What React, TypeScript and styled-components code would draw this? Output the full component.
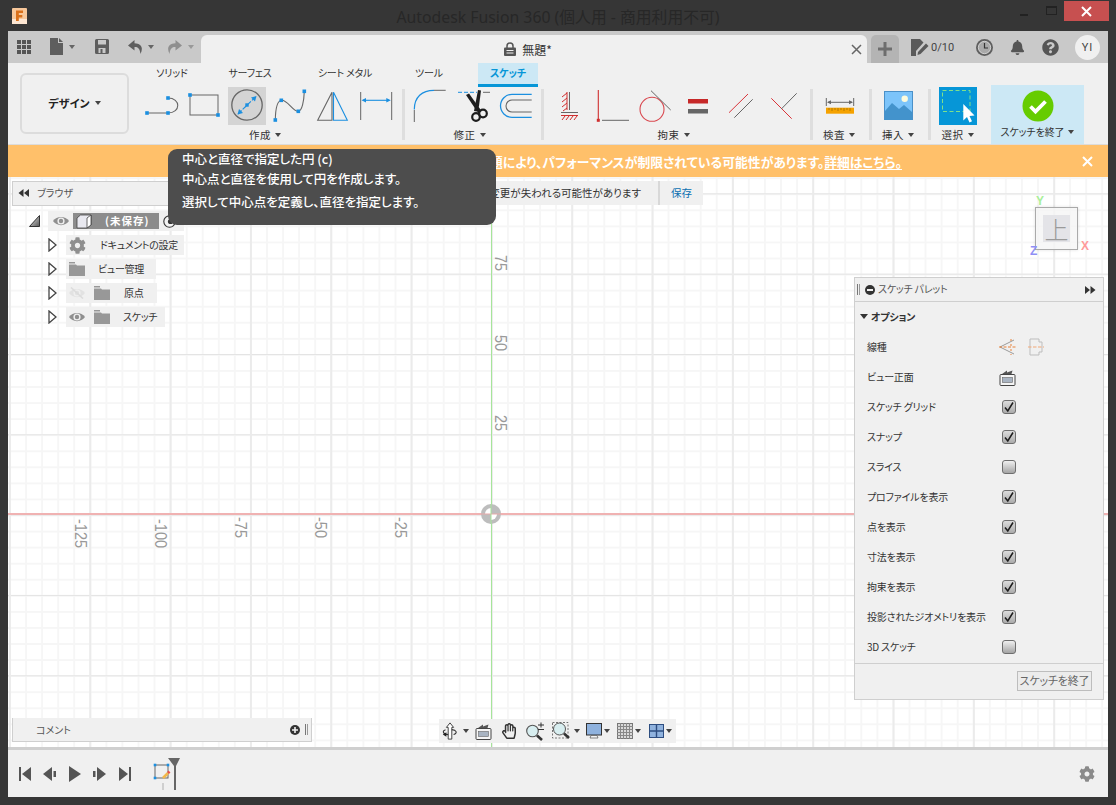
import React from "react";
import styled, { createGlobalStyle } from "styled-components";
import { FaBell, FaCog, FaQuestionCircle, FaRegHandPaper } from "react-icons/fa";

const JP = `"Noto Sans CJK JP", "Noto Sans", sans-serif`;
const BLUE = "#1b8fe0";
const GREY = "#666";
const RED = "#cf2f2f";

const GlobalStyle = createGlobalStyle`
  html, body { margin: 0; padding: 0; background: #363636; overflow: hidden; }
  * { box-sizing: border-box; }
  body { font-family: ${JP}; font-feature-settings: "palt"; }
`;

const Root = styled.div`
  position: relative;
  width: 1116px;
  height: 805px;
  display: flex;
  flex-direction: column;
  background: #363636;
  color: #333;
`;

/* ---- title bar ---- */
const TitleBar = styled.div`
  height: 31px;
  display: grid;
  grid-template-columns: 1fr auto 1fr;
  align-items: start;
`;
const AppLogo = styled.div`
  margin: 8px 0 0 12px;
  width: 15px;
  height: 16px;
`;
const TitleText = styled.div`
  margin-top: 6px;
  font-size: 15.8px;
  line-height: 22px;
  color: #272727;
  white-space: nowrap;
  font-family: "Noto Sans", ${JP};
`;
const WindowControls = styled.div`
  justify-self: end;
  display: flex;
  align-items: flex-start;
  margin: 1px 7px 0 0;
`;
const WinButton = styled.div<{ $close?: boolean }>`
  width: ${(p) => (p.$close ? 45 : 26)}px;
  height: 20px;
  display: flex;
  align-items: center;
  justify-content: center;
  background: ${(p) => (p.$close ? "#c75050" : "transparent")};
`;

/* ---- app frame ---- */
const Frame = styled.div`
  flex: 1;
  margin: 0 8px 8px;
  display: flex;
  flex-direction: column;
  min-height: 0;
`;

const TabBar = styled.div`
  height: 32px;
  flex: none;
  display: flex;
  background: #c9c9c9;
`;
const QuickBar = styled.div`
  width: 193px;
  padding-left: 9px;
  display: flex;
  align-items: center;
  padding-bottom: 1px;
`;
const QuickSlot = styled.div<{ $gap: number }>`
  display: flex;
  margin-left: ${(p) => p.$gap}px;
`;
const DocTab = styled.div`
  position: relative;
  width: 666px;
  margin-top: 4px;
  background: #f0f0f0;
  border-radius: 6px 6px 0 0;
  display: flex;
  align-items: center;
  justify-content: center;
  gap: 6px;
  font-size: 12px;
  padding-right: 12px;
  color: #333;
`;
const TabClose = styled.div`
  position: absolute;
  right: 5px;
  top: 9px;
  display: flex;
`;
const PlusTab = styled.div`
  width: 28px;
  margin: 4px 0 0 4px;
  background: #b4b4b4;
  border-radius: 5px 5px 0 0;
  display: flex;
  align-items: center;
  justify-content: center;
`;
const RightCluster = styled.div`
  flex: 1;
  display: flex;
  align-items: center;
  padding-left: 12px;
  color: #555;
`;
const Quota = styled.div`
  display: flex;
  align-items: center;
  gap: 2px;
  font-family: "Roboto", sans-serif;
  font-size: 11px;
  color: #444;
  width: 57px;
`;
const StatusIcon = styled.div`
  width: 33px;
  display: flex;
  justify-content: center;
  color: #555;
`;
const Avatar = styled.div`
  width: 25px;
  height: 25px;
  margin-left: 8px;
  border-radius: 50%;
  background: #f0f0f0;
  display: flex;
  align-items: center;
  justify-content: center;
  font-family: "Roboto", sans-serif;
  font-size: 11px;
  color: #444;
  letter-spacing: 1px;
`;

/* ---- ribbon ---- */
const Ribbon = styled.div`
  height: 82px;
  flex: none;
  display: flex;
  background: #f0f0f0;
  border-bottom: 1px solid #dcdcdc;
`;
const DesignBox = styled.div`
  margin: 10px 0 0 12px;
  width: 109px;
  height: 61px;
  padding-bottom: 2px;
  border: 2px solid #dcdcdc;
  border-radius: 6px;
  display: flex;
  align-items: center;
  justify-content: center;
  gap: 5px;
  font-size: 11px;
  font-weight: 700;
  color: #222;
`;
const ToolArea = styled.div`
  margin-left: 7px;
  display: flex;
  flex-direction: column;
`;
const TabRow = styled.div`
  height: 24px;
  display: flex;
`;
const RibbonTab = styled.div<{ $w: number; $active?: boolean; $gap?: number }>`
  width: ${(p) => p.$w}px;
  margin-left: ${(p) => p.$gap || 0}px;
  text-align: center;
  font-size: 10px;
  letter-spacing: -0.2px;
  line-height: 20px;
  white-space: nowrap;
  color: ${(p) => (p.$active ? "#0696d7" : "#333")};
  font-weight: ${(p) => (p.$active ? 700 : 400)};
  background: ${(p) => (p.$active ? "#cce8f5" : "transparent")};
  border-bottom: ${(p) => (p.$active ? "3px solid #0696d7" : "none")};
`;
const ToolRow = styled.div`
  display: flex;
  align-items: flex-start;
`;
const Group = styled.div<{ $l: number; $r: number }>`
  padding: 0 ${(p) => p.$r}px 0 ${(p) => p.$l}px;
  display: flex;
  flex-direction: column;
`;
const ToolIcons = styled.div`
  display: flex;
  gap: 5px;
`;
const Tool = styled.div<{ $state?: "active" | "select" }>`
  width: 38px;
  height: 38px;
  flex: none;
  background: ${(p) =>
    p.$state === "active" ? "#d4d4d4" : p.$state === "select" ? "#0696d7" : "transparent"};
`;
const GroupLabel = styled.div<{ $pull?: number }>`
  height: 19px;
  padding-right: ${(p) => p.$pull || 0}px;
  display: flex;
  align-items: center;
  justify-content: center;
  gap: 4px;
  font-size: 10.5px;
  white-space: nowrap;
  color: #333;
  letter-spacing: 0.5px;
`;
const FinishLabel = styled(GroupLabel)`
  font-size: 10px;
  letter-spacing: -0.1px;
`;
const Caret = styled.span<{ $color?: string; $big?: boolean }>`
  display: inline-block;
  flex: none;
  width: 0;
  height: 0;
  border-left: ${(p) => (p.$big ? 4 : 3.5)}px solid transparent;
  border-right: ${(p) => (p.$big ? 4 : 3.5)}px solid transparent;
  border-top: ${(p) => (p.$big ? 5 : 4)}px solid ${(p) => p.$color || "#444"};
`;
const GroupSep = styled.div`
  width: 3px;
  height: 51px;
  margin-top: 2px;
  background: #dedede;
`;
const FinishButton = styled.div`
  width: 93px;
  height: 59px;
  margin-top: -2px;
  background: #cce8f5;
  display: flex;
  flex-direction: column;
  align-items: center;
  padding-top: 5px;
`;

/* ---- banner ---- */
const Banner = styled.div`
  height: 32px;
  flex: none;
  display: flex;
  align-items: center;
  background: #ffc06a;
  color: #fff;
  font-size: 12.8px;
  font-weight: 700;
`;
const BannerText = styled.div`
  flex: 1;
  text-align: right;
  padding-right: 171px;
  white-space: nowrap;
  overflow: hidden;
  u { text-underline-offset: 2px; }
`;
const BannerClose = styled.div`
  width: 35px;
  display: flex;
  padding-left: 9px;
`;

/* ---- canvas ---- */
const Canvas = styled.div`
  position: relative;
  flex: 1;
  overflow: hidden;
  background-color: #fff;
  background-image:
    linear-gradient(to right, #ebebeb 2px, transparent 2px),
    linear-gradient(to bottom, #e4e4e4 1px, transparent 1px),
    linear-gradient(to right, #f6f6f6 2px, transparent 2px),
    linear-gradient(to bottom, #f6f6f6 2px, transparent 2px);
  background-size: 80.33px 100%, 100% 80.33px, 16.066px 100%, 100% 16.066px;
  background-position: 402.6px 0, 0 -64px, 402.6px 0, 0 -64px;
`;
const AxisV = styled.div`
  position: absolute;
  left: 483px;
  top: 0;
  bottom: 0;
  width: 1px;
  background: #a6e59a;
`;
const AxisH = styled.div`
  position: absolute;
  left: 0;
  right: 0;
  top: 336px;
  height: 2px;
  background: #f0b2b2;
`;
const OriginMark = styled.div`
  position: absolute;
  left: 473px;
  top: 327px;
  display: flex;
`;
const AxisLabel = styled.div<{ $x: number; $y: number }>`
  position: absolute;
  left: ${(p) => p.$x}px;
  top: ${(p) => p.$y}px;
  writing-mode: vertical-rl;
  transform: scaleY(0.88);
  transform-origin: top;
  font-family: "Liberation Sans", sans-serif;
  font-size: 16.5px;
  line-height: 14px;
  color: #999;
`;

/* ---- browser ---- */
const BrowserPanel = styled.div`
  position: absolute;
  left: 4px;
  top: 4px;
  width: 300px;
`;
const PanelHeader = styled.div`
  height: 25px;
  display: flex;
  align-items: center;
  gap: 8px;
  padding: 0 0 2px 5px;
  background: #f0f0f0;
  border: 1px solid #cfcfcf;
  font-size: 10px;
  color: #555;
`;
const Tree = styled.div`
  margin-top: 5px;
  display: flex;
  flex-direction: column;
  gap: 4px;
`;
const TreeRow = styled.div<{ $indent: number }>`
  height: 20px;
  display: flex;
  align-items: center;
  padding-left: ${(p) => p.$indent}px;
`;
const TreeToggle = styled.div<{ $gap: number }>`
  display: flex;
  margin-right: ${(p) => p.$gap}px;
`;
const TreePill = styled.div<{ $w: number }>`
  width: ${(p) => p.$w}px;
  height: 20px;
  display: flex;
  align-items: center;
  background: #f0f0f0;
  font-size: 10px;
  letter-spacing: -0.3px;
  color: #333;
  white-space: nowrap;
`;
const TreeIcon = styled.div<{ $w: number }>`
  width: ${(p) => p.$w}px;
  flex: none;
  display: flex;
  justify-content: center;
  color: #8f8f8f;
`;
const RootBlock = styled.div`
  width: 86px;
  height: 16px;
  display: flex;
  align-items: center;
  background: #8c8c8c;
  color: #fff;
  font-weight: 700;
  font-size: 10.5px;
  letter-spacing: 1px;
`;
const TreeText = styled.span<{ $ml: number }>`
  margin-left: ${(p) => p.$ml}px;
  padding-bottom: 1px;
`;

const WarningBar = styled.div`
  position: absolute;
  left: 308px;
  top: 4px;
  width: 387px;
  height: 24px;
  display: flex;
  align-items: center;
  background: #f0f0f0;
  font-size: 10.5px;
  color: #333;
`;
const WarningText = styled.div`
  flex: 1;
  text-align: right;
  padding: 0 17px 2px 0;
  white-space: nowrap;
`;
const WarningSave = styled.div`
  width: 45px;
  height: 24px;
  padding-bottom: 2px;
  border-left: 2px solid #d8d8d8;
  display: flex;
  align-items: center;
  justify-content: center;
  color: #0a6fb0;
`;

const CommentPanel = styled.div`
  position: absolute;
  left: 4px;
  bottom: 5px;
  width: 300px;
  height: 24px;
  display: flex;
  align-items: center;
  padding: 0 3px 0 23px;
  background: #f0f0f0;
  border: 1px solid #cfcfcf;
  border-top: none;
  font-size: 10px;
  color: #555;
`;
const CommentTools = styled.div`
  margin-left: auto;
  display: flex;
  align-items: center;
  gap: 5px;
`;
const Grip = styled.div`
  width: 3px;
  height: 11px;
  border-left: 1px solid #777;
  border-right: 1px solid #999;
`;

/* ---- view cube ---- */
const ViewCube = styled.div`
  position: absolute;
  left: 1027px;
  top: 30px;
  width: 43px;
  height: 43px;
  padding: 7px;
  background: rgba(245, 245, 245, 0.8);
  border: 1px solid #aaa;
  box-shadow: 0 0 3px rgba(0, 0, 0, 0.12);
`;
const CubeFace = styled.div`
  width: 27px;
  height: 27px;
  background: #e4e4e8;
  color: #9a9a9a;
  display: flex;
  align-items: center;
  justify-content: center;
  font-size: 24px;
  line-height: 27px;
  font-weight: 300;
`;
const CubeAxis = styled.span<{ $c: string; $l: number; $t: number }>`
  position: absolute;
  left: ${(p) => p.$l}px;
  top: ${(p) => p.$t}px;
  font-family: "Liberation Sans", sans-serif;
  font-size: 12px;
  line-height: 12px;
  font-weight: 700;
  color: ${(p) => p.$c};
`;

/* ---- sketch palette ---- */
const Palette = styled.div`
  position: absolute;
  left: 846px;
  top: 100px;
  width: 250px;
  background: #f0f0f0;
  border: 1px solid #cfcfcf;
  font-size: 10px;
  letter-spacing: -0.2px;
  color: #333;
`;
const PaletteHead = styled.div`
  height: 24px;
  display: flex;
  align-items: center;
  padding: 0 7px 0 2px;
  border-bottom: 1px solid #cfcfcf;
  color: #555;
`;
const PaletteTitle = styled.span`
  margin-left: -2px;
  padding-bottom: 2px;
`;
const OptionHead = styled.div`
  height: 30px;
  display: flex;
  align-items: center;
  gap: 3px;
  padding: 0 0 2px 5px;
  font-weight: 700;
  color: #333;
`;
const OptionRow = styled.div`
  height: 30px;
  display: flex;
  align-items: center;
  padding-left: 12px;
`;
const OptionLabel = styled.div`
  width: 135px;
  flex: none;
  padding-bottom: 2px;
  white-space: nowrap;
`;
const OptionIcons = styled.div`
  display: flex;
  align-items: center;
  gap: 10px;
  margin-left: -3px;
`;
const CheckBox = styled.div<{ $on: boolean }>`
  width: 14px;
  height: 14px;
  border: 1px solid #6e6e6e;
  border-radius: 3px;
  background: ${(p) =>
    p.$on
      ? "linear-gradient(#dcdcdc, #ababab)"
      : "linear-gradient(#f0f0f0, #a4a4a4)"};
  display: flex;
  align-items: center;
  justify-content: center;
`;
const PaletteFoot = styled.div`
  margin-top: 1px;
  height: 36px;
  display: flex;
  align-items: flex-start;
  justify-content: flex-end;
  padding: 7px 11px 0 0;
  border-top: 1px solid #cfcfcf;
`;
const PlainButton = styled.div`
  width: 75px;
  height: 20px;
  border: 1px solid #bdbdbd;
  background: #ececec;
  color: #666;
  font-size: 11px;
  line-height: 17px;
  text-align: center;
  white-space: nowrap;
`;

/* ---- nav bar ---- */
const NavBar = styled.div`
  position: absolute;
  left: 431px;
  top: 542px;
  width: 237px;
  height: 24px;
  display: flex;
  align-items: center;
  padding-left: 2px;
  background: #f0f0f0;
`;
const NavSlot = styled.div<{ $w: number; $ml?: number }>`
  width: ${(p) => p.$w}px;
  margin-left: ${(p) => p.$ml || 0}px;
  flex: none;
  display: flex;
  align-items: center;
  justify-content: center;
  color: #333;
`;

/* ---- timeline ---- */
const Timeline = styled.div`
  height: 50px;
  flex: none;
  display: flex;
  align-items: center;
  padding: 0 13px 0 4px;
  background: #f0f0f0;
  border-top: 3px solid #cfcfcf;
`;
const PlayButton = styled.div`
  width: 25px;
  display: flex;
  justify-content: center;
`;
const TimelineMarks = styled.div`
  margin-left: 16px;
  display: flex;
`;
const TimelineGear = styled.div`
  margin-left: auto;
  display: flex;
  color: #8a8a8a;
`;

/* ---- tooltip ---- */
const Tooltip = styled.div`
  position: absolute;
  left: 168px;
  top: 149px;
  width: 328px;
  height: 76px;
  padding-left: 14px;
  border-radius: 9px;
  background: #4d4d4d;
  color: #fff;
  font-size: 12.5px;
  font-weight: 500;
  line-height: 20px;
  white-space: nowrap;
`;
const TipLine = styled.div<{ $gap?: number }>`
  margin-top: ${(p) => p.$gap || 0}px;
`;

/* ---- drawings ---- */
const Sq = ({ x, y, c = BLUE, s = 3.6 }: { x: number; y: number; c?: string; s?: number }) => (
  <rect x={x - s / 2} y={y - s / 2} width={s} height={s} fill={c} />
);

const Ico = ({ children, s = 38 }: { children: React.ReactNode; s?: number }) => (
  <svg width={s} height={s} viewBox={`0 0 ${s} ${s}`} fill="none" style={{ display: "block" }}>
    {children}
  </svg>
);

const SlotIcon = () => (
  <Ico>
    <path d="M5 26H26" stroke={GREY} strokeWidth="1" />
    <path d="M26 11C39 11 39 26 26 26" stroke={GREY} strokeWidth="1.1" />
    <Sq x={5} y={26} />
    <Sq x={26} y={26} />
    <Sq x={26} y={11} />
  </Ico>
);
const RectIcon = () => (
  <Ico>
    <rect x="5" y="8" width="28" height="20" stroke={GREY} strokeWidth="1" />
    <Sq x={5} y={8} />
    <Sq x={33} y={28} />
  </Ico>
);
const CircleIcon = () => (
  <Ico>
    <circle cx="19" cy="18" r="15.2" stroke={GREY} strokeWidth="1.3" />
    <path d="M10 27L28 9.5" stroke={BLUE} strokeWidth="1.1" strokeDasharray="5 1.5" />
    <path d="M28.5 9L23 10.5L27 14.5Z" fill={BLUE} />
    <path d="M9.5 27.5L15 26L11 22Z" fill={BLUE} />
    <Sq x={19} y={18} s={3.4} />
  </Ico>
);
const SplineIcon = () => (
  <Ico>
    <path d="M4.3 33C4.5 22 6 14 10.3 13.3C16 12 22 25 27.3 24.3C31 24 33 14 33.3 4.3" stroke={GREY} strokeWidth="1.1" />
    <Sq x={4.3} y={33} />
    <Sq x={10.3} y={13.3} />
    <Sq x={27.3} y={24.3} />
    <Sq x={33.3} y={4.3} />
  </Ico>
);
const TriangleIcon = () => (
  <Ico>
    <path d="M18 5.3L3.7 33.3H18Z" stroke={GREY} strokeWidth="1.1" />
    <path d="M19.5 5.3L33.3 33.3H19.5Z" stroke={BLUE} strokeWidth="1.1" />
  </Ico>
);
const DimIcon = () => (
  <Ico>
    <path d="M3.7 5V33M34.7 5V33" stroke={GREY} strokeWidth="1" />
    <path d="M6 13.3H32" stroke={BLUE} strokeWidth="1.1" />
    <path d="M4.5 13.3L9 11V15.6ZM33.8 13.3L29.3 11V15.6Z" fill={BLUE} />
  </Ico>
);
const FilletIcon = () => (
  <Ico>
    <path d="M3.3 23V35M23 3.3H34.7" stroke={GREY} strokeWidth="1" />
    <path d="M3.3 22.5C3.3 10 11 3.3 23 3.3" stroke={BLUE} strokeWidth="1.2" />
  </Ico>
);
const ScissorsIcon = () => (
  <Ico>
    <path d="M4 5.3H23" stroke={BLUE} strokeWidth="1" strokeDasharray="4 2" />
    <path d="M29 5.3H36" stroke={GREY} strokeWidth="1" />
    <path d="M12 8L15 6.5L27.5 24L24.5 26.5Z" fill="#1d1d1d" />
    <path d="M24 3L27 3.5L25 19L23 24.5L20 24Z" fill="#1d1d1d" />
    <circle cx="22" cy="30" r="3.8" stroke="#1d1d1d" strokeWidth="2.2" />
    <circle cx="29" cy="26.5" r="3.8" stroke="#1d1d1d" strokeWidth="2.2" />
  </Ico>
);
const OffsetIcon = () => (
  <Ico>
    <path d="M34.7 7.3H15A11.5 11.5 0 0 0 15 30.3H34.7" stroke={BLUE} strokeWidth="1.3" />
    <path d="M34.7 13H15A6 6 0 0 0 15 25H34.7" stroke={GREY} strokeWidth="1.1" />
  </Ico>
);
const FixIcon = () => (
  <Ico>
    <path d="M19.5 5V23M11 25.5H28" stroke={GREY} strokeWidth="1" />
    <path d="M17 5V23M11 28.5H28" stroke={RED} strokeWidth="1" />
    <path d="M17 6L12 10M17 11L12 15M17 16L12 20M17 21L13 24" stroke={RED} strokeWidth="1" />
    <path d="M15 29L12 33M19 29L16 33M23 29L20 33M27 29L24 33" stroke={RED} strokeWidth="1" />
  </Ico>
);
const CoincidentIcon = () => (
  <Ico>
    <path d="M5.3 3V32" stroke={RED} strokeWidth="1.1" />
    <rect x="3.8" y="31.8" width="3" height="3" fill={RED} />
    <path d="M9 33.3H36" stroke={GREY} strokeWidth="1" />
  </Ico>
);
const TangentIcon = () => (
  <Ico>
    <circle cx="16" cy="22.3" r="12" stroke="#d9484f" strokeWidth="1.1" />
    <path d="M15 3.7L34.7 23" stroke={GREY} strokeWidth="1" />
  </Ico>
);
const EqualIcon = () => (
  <Ico>
    <rect x="9" y="12" width="20" height="4.5" fill="#c62828" />
    <rect x="9" y="22" width="20" height="4.5" fill={GREY} />
  </Ico>
);
const ParallelIcon = () => (
  <Ico>
    <path d="M7 25.7L26 7" stroke="#d9343a" strokeWidth="1" />
    <path d="M12.3 30.7L30.7 12.3" stroke={GREY} strokeWidth="1" />
  </Ico>
);
const PerpIcon = () => (
  <Ico>
    <path d="M6.3 11.3L26.7 31.7" stroke="#d9343a" strokeWidth="1" />
    <path d="M16.3 22L31.7 6.3" stroke={GREY} strokeWidth="1" />
  </Ico>
);
const MeasureIcon = () => (
  <Ico>
    <path d="M5.3 11V19M32.7 11V19M7 15.3H31" stroke={GREY} strokeWidth="1" />
    <path d="M6 15.3L10 13.3V17.3ZM32 15.3L28 13.3V17.3Z" fill={GREY} />
    <rect x="5" y="20.7" width="28" height="6" fill="#f5a200" />
    <path d="M8 21V23M11 21V24M14 21V23M17 21V24M20 21V23M23 21V24M26 21V23M29 21V24" stroke="#9a6a00" strokeWidth="0.7" />
  </Ico>
);
const ImageIcon = () => (
  <Ico>
    <rect x="5.5" y="4.5" width="28" height="28" fill="#7cc4fa" stroke="#4a90c8" />
    <path d="M6 33V24L13 16L20 22L25 18L33 25V33Z" fill="#4393cc" />
    <circle cx="25.7" cy="11.7" r="3.2" fill="#fdfbdc" />
  </Ico>
);
const SelectIcon = () => (
  <Ico>
    <rect x="3.5" y="3.5" width="27.5" height="21" stroke="#7fe08a" strokeWidth="1" strokeDasharray="4 2.5" />
    <path d="M24.3 17V33.5L28 30L30.5 35.5L33 34.3L30.5 29L35.5 28.5Z" fill="#fff" />
  </Ico>
);
const CheckCircle = () => (
  <svg width="32" height="32" viewBox="0 0 32 32" style={{ display: "block" }}>
    <circle cx="16" cy="16" r="15.5" fill="#66cc00" />
    <path d="M8.5 16.5L13.5 21.5L23.5 11.5" fill="none" stroke="#fff" strokeWidth="3.8" />
  </svg>
);

const XMark = ({ s = 11, c = "#fff", w = 2 }: { s?: number; c?: string; w?: number }) => (
  <svg width={s} height={s} viewBox="0 0 11 11" style={{ display: "block" }}>
    <path d="M1 1L10 10M10 1L1 10" stroke={c} strokeWidth={w} fill="none" />
  </svg>
);

const LogoIcon = () => (
  <svg width="15" height="16" viewBox="0 0 15 16" style={{ display: "block" }}>
    <rect width="15" height="16" rx="1" fill="#f7c79a" />
    <rect y="11" width="15" height="5" fill="#fde6d2" />
    <path d="M4 2.5H11V5H6.8V7H10.3V9.5H6.8V13H4Z" fill="#d9701a" />
  </svg>
);

const AppsIcon = () => (
  <svg width="14" height="14" viewBox="0 0 14 14" fill="#555" style={{ display: "block" }}>
    {[0, 5, 10].map((y) =>
      [0, 5, 10].map((x) => <rect key={`${x}-${y}`} x={x} y={y} width="4" height="4" />)
    )}
  </svg>
);
const FileIcon = () => (
  <svg width="13" height="17" viewBox="0 0 13 17" fill="#5e5e5e" style={{ display: "block" }}>
    <path d="M0 0H8V5H13V17H0ZM9 0L13 4H9Z" />
  </svg>
);
const SaveIcon = () => (
  <svg width="14" height="15" viewBox="0 0 14 15" style={{ display: "block" }}>
    <path d="M0 1.5A1.5 1.5 0 0 1 1.5 0H12.5A1.5 1.5 0 0 1 14 1.5V13.5A1.5 1.5 0 0 1 12.5 15H1.5A1.5 1.5 0 0 1 0 13.5Z" fill="#5e5e5e" />
    <rect x="3" y="1" width="8" height="4.5" fill="#c9c9c9" />
    <rect x="3.5" y="9" width="7" height="5" fill="#c9c9c9" />
    <rect x="5.5" y="10" width="2" height="4" fill="#5e5e5e" />
  </svg>
);
const UndoIcon = ({ c, flip }: { c: string; flip?: boolean }) => (
  <svg width="15" height="14" viewBox="0 0 15 14" style={{ display: "block", transform: flip ? "scaleX(-1)" : undefined }}>
    <path d="M6.5 0L0 5.5L6.5 10.5V7C9.5 6.8 11.8 8 12.5 14C15.5 8 13.5 3.5 6.5 3.3Z" fill={c} />
  </svg>
);
const LockIcon = () => (
  <svg width="12" height="14" viewBox="0 0 12 14" style={{ display: "block" }}>
    <path d="M3 6V4A3 3 0 0 1 9 4V6" stroke="#555" strokeWidth="1.5" fill="none" />
    <rect y="5.5" width="12" height="8.5" rx="1" fill="#555" />
    <path d="M2.5 8.5H9.5M2.5 11H9.5" stroke="#f0f0f0" strokeWidth="1" />
  </svg>
);
const QuotaIcon = () => (
  <svg width="18" height="17" viewBox="0 0 18 17" style={{ display: "block" }}>
    <path d="M0 0H9L12.5 3.5L5 12V17H0Z" fill="#5a5a5a" />
    <path d="M7 13L15 4.5L17.5 7L9.5 15L6.5 16Z" fill="#5a5a5a" />
  </svg>
);
const ClockIcon = () => (
  <svg width="17" height="17" viewBox="0 0 17 17" style={{ display: "block" }}>
    <circle cx="8.5" cy="8.5" r="8.5" fill="#5f5f5f" />
    <circle cx="8.5" cy="8.5" r="6.2" fill="#a9a9a9" stroke="#e2e2e2" strokeWidth="0.8" />
    <path d="M8.5 4V9H12" stroke="#333" strokeWidth="1.2" fill="none" />
  </svg>
);

const DoubleArrow = ({ left }: { left?: boolean }) => (
  <svg width="11" height="8" viewBox="0 0 11 8" fill="#333" style={{ display: "block", transform: left ? "scaleX(-1)" : undefined }}>
    <path d="M0 0L5 4L0 8ZM5.5 0L10.5 4L5.5 8Z" />
  </svg>
);
const EyeIcon = ({ off }: { off?: boolean }) => (
  <svg width="16" height="12" viewBox="0 0 16 12" style={{ display: "block" }}>
    <path d="M0 6C3.5 0.5 12.5 0.5 16 6C12.5 11.5 3.5 11.5 0 6Z" fill={off ? "#e2e2e2" : "#8f8f8f"} />
    <circle cx="8" cy="6" r="3.6" fill="#f0f0f0" />
    <circle cx="8" cy="6" r="2.2" fill={off ? "#e2e2e2" : "#8f8f8f"} />
    {off && <path d="M2 0.5L14 11.5" stroke="#dcdcdc" strokeWidth="1.6" />}
  </svg>
);
const FolderIcon = () => (
  <svg width="16" height="14" viewBox="0 0 16 14" fill="#989898" style={{ display: "block" }}>
    <path d="M0 0H6V1.5H0ZM0 2.5H7L8 3.5H16V14H0Z" />
  </svg>
);
const RootToggle = () => (
  <svg width="11" height="12" viewBox="0 0 11 12" style={{ display: "block" }}>
    <defs>
      <linearGradient id="rootFill" x1="0" y1="0" x2="1" y2="1">
        <stop offset="0" stopColor="#eee" />
        <stop offset="1" stopColor="#555" />
      </linearGradient>
    </defs>
    <path d="M10.5 0.5V11.5H0.5Z" fill="url(#rootFill)" stroke="#333" />
  </svg>
);
const ChildToggle = () => (
  <svg width="9" height="14" viewBox="0 0 9 14" style={{ display: "block" }}>
    <path d="M1 1L8 7L1 13Z" fill="#fff" stroke="#444" strokeWidth="1.3" />
  </svg>
);
const CubeIcon = () => (
  <svg width="16" height="15" viewBox="0 0 16 15" style={{ display: "block" }}>
    <path d="M1 4L4.5 1H15L15 11L11 14H1Z" fill="#e9e9f0" stroke="#444" strokeWidth="0.8" />
    <path d="M11 4V14L15 11V1Z" fill="#fff" stroke="#444" strokeWidth="0.8" />
  </svg>
);
const RadioMark = () => (
  <svg width="13" height="13" viewBox="0 0 13 13" style={{ display: "block" }}>
    <circle cx="6.5" cy="6.5" r="5.7" fill="#f4f4f4" stroke="#333" strokeWidth="1.1" />
    <circle cx="7.5" cy="6.5" r="2.6" fill="#333" />
  </svg>
);
const MinusCircle = () => (
  <svg width="10" height="10" viewBox="0 0 10 10" style={{ display: "block" }}>
    <circle cx="5" cy="5" r="5" fill="#333" />
    <rect x="2" y="4" width="6" height="2" fill="#f0f0f0" />
  </svg>
);
const PlusCircle = () => (
  <svg width="10" height="10" viewBox="0 0 10 10" style={{ display: "block" }}>
    <circle cx="5" cy="5" r="5" fill="#333" />
    <path d="M2 4.2H4.2V2H5.8V4.2H8V5.8H5.8V8H4.2V5.8H2Z" fill="#f0f0f0" />
  </svg>
);
const OriginIcon = () => (
  <svg width="20" height="20" viewBox="0 0 20 20" style={{ display: "block" }}>
    <circle cx="10" cy="10" r="10" fill="#bdbdbd" />
    <path d="M10 4A6 6 0 0 0 4 10H10Z" fill="#fff" />
    <path d="M10 16A6 6 0 0 0 16 10H10Z" fill="#fff" />
    <path d="M0 10H20" stroke="#e9a9a9" strokeWidth="1" />
    <path d="M10 0V20" stroke="#a6e59a" strokeWidth="1" />
  </svg>
);
const LineTypeA = () => (
  <svg width="18" height="18" viewBox="0 0 18 18" style={{ display: "block" }}>
    <path d="M1 9L15 2M1 9L15 16" stroke="#9a9a9a" strokeWidth="1" fill="none" />
    <path d="M0 9H17" stroke="#e8823a" strokeWidth="1" strokeDasharray="3 1.5" />
    <path d="M12 1V17" stroke="#e8823a" strokeWidth="1" strokeDasharray="2 3" />
  </svg>
);
const LineTypeB = () => (
  <svg width="18" height="18" viewBox="0 0 18 18" style={{ display: "block" }}>
    <path d="M3 1H12V4H15V14H12V17H3Z" stroke="#bdbdbd" strokeWidth="1" fill="none" strokeLinejoin="round" />
    <path d="M1 9H17" stroke="#f2a978" strokeWidth="1" strokeDasharray="3.5 1.5" />
  </svg>
);
const ViewFrontIcon = () => (
  <svg width="17" height="17" viewBox="0 0 17 17" style={{ display: "block" }}>
    <path d="M3 5L8 1.5V3.5L13.5 1.5L12.5 5Z" fill="#555" />
    <rect x="1" y="5.5" width="15" height="11" rx="1" fill="#f5f5f5" stroke="#444" />
    <rect x="3.5" y="8.5" width="10" height="5" fill="#a9b4c2" stroke="#666" strokeWidth="0.6" />
  </svg>
);
const CheckMark = () => (
  <svg width="12" height="12" viewBox="0 0 12 12" style={{ display: "block" }}>
    <path d="M2 6.5L4.8 10L10 1.5" fill="none" stroke="#1c1c1c" strokeWidth="1.5" />
  </svg>
);

const OrbitIcon = () => (
  <svg width="20" height="20" viewBox="0 0 20 20" style={{ display: "block" }}>
    <path d="M10 1L14 6H12V19H8V6H6Z" fill="#fff" stroke="#333" strokeWidth="1" />
    <path d="M8 14C2 13.5 1 10 5 8.5M12 8.5C17 9 19 12 14 14" fill="none" stroke="#333" strokeWidth="1.2" />
    <path d="M2 14L6 11.5V16.5Z" fill="#222" />
  </svg>
);
const ZoomLens = () => (
  <svg width="20" height="20" viewBox="0 0 20 20" style={{ display: "block" }}>
    <circle cx="7.5" cy="10" r="5.8" fill="#d8eef0" stroke="#555" strokeWidth="1.1" />
    <path d="M12 14.5L17 19" stroke="#333" strokeWidth="2.6" />
    <path d="M13 4H19M16 1.5V6.5M13 8.5H19" stroke="#333" strokeWidth="1" />
  </svg>
);
const FitIcon = () => (
  <svg width="18" height="18" viewBox="0 0 18 18" style={{ display: "block" }}>
    <rect x="0.5" y="0.5" width="15.5" height="15.5" fill="none" stroke="#555" strokeWidth="0.8" strokeDasharray="2 1.5" />
    <circle cx="7.5" cy="7" r="6" fill="#d8eef0" stroke="#555" strokeWidth="1" />
    <path d="M12 11.5L17 16" stroke="#333" strokeWidth="2.6" />
  </svg>
);
const DisplayIcon = () => (
  <svg width="16" height="16" viewBox="0 0 16 16" style={{ display: "block" }}>
    <rect x="0.5" y="0.5" width="15" height="11.5" fill="#8fb2de" stroke="#333" />
    <path d="M5 12.5H11L12 15H4Z" fill="#f5f5f5" stroke="#555" strokeWidth="0.7" />
  </svg>
);
const GridIcon = () => (
  <svg width="16" height="16" viewBox="0 0 16 16" style={{ display: "block" }}>
    <rect x="0.5" y="0.5" width="15" height="15" fill="#d9d9d9" stroke="#777" />
    <path d="M3.5 0V16M6.5 0V16M9.5 0V16M12.5 0V16M0 3.5H16M0 6.5H16M0 9.5H16M0 12.5H16" stroke="#888" strokeWidth="1" />
  </svg>
);
const PanesIcon = () => (
  <svg width="15" height="14" viewBox="0 0 15 14" style={{ display: "block" }}>
    <rect x="0.5" y="0.5" width="14" height="13" fill="#8fb2de" stroke="#2d4d80" />
    <path d="M7.5 0V14M0 7H15" stroke="#2d4d80" strokeWidth="1.4" />
  </svg>
);

const FirstIcon = () => (
  <svg width="12" height="14" viewBox="0 0 12 14" fill="#555" style={{ display: "block" }}>
    <rect width="2" height="14" />
    <path d="M12 0V14L3 7Z" />
  </svg>
);
const PrevIcon = () => (
  <svg width="13" height="14" viewBox="0 0 13 14" fill="#555" style={{ display: "block" }}>
    <path d="M9 0V14L0 7Z" />
    <rect x="10.5" y="4" width="2.5" height="6" />
  </svg>
);
const PlayIcon = () => (
  <svg width="12" height="16" viewBox="0 0 12 16" fill="#555" style={{ display: "block" }}>
    <path d="M0 0L12 8L0 16Z" />
  </svg>
);
const NextIcon = () => (
  <svg width="13" height="14" viewBox="0 0 13 14" fill="#555" style={{ display: "block" }}>
    <rect y="4" width="2.5" height="6" />
    <path d="M4 0V14L13 7Z" />
  </svg>
);
const LastIcon = () => (
  <svg width="12" height="14" viewBox="0 0 12 14" fill="#555" style={{ display: "block" }}>
    <path d="M0 0V14L9 7Z" />
    <rect x="10" width="2" height="14" />
  </svg>
);
const TimelineMarksIcon = () => (
  <svg width="28" height="32" viewBox="0 0 28 32" style={{ display: "block" }}>
    <rect x="2" y="7" width="13" height="13" fill="none" stroke="#666" strokeWidth="1" />
    <Sq x={2} y={7} s={2.6} />
    <Sq x={15} y={7} s={2.6} />
    <Sq x={2} y={20} s={2.6} />
    <path d="M10 20L15 15" stroke="#f2b84b" strokeWidth="2.6" />
    <path d="M15 15L16.5 13.5" stroke="#e8504a" strokeWidth="2.6" />
    <path d="M10 25V32" stroke="#cfcfcf" strokeWidth="2" />
    <path d="M15 0H27L23 8V32H21V8Z" fill="#666" />
  </svg>
);

const OPTIONS: [string, boolean][] = [
  ["スケッチ グリッド", true],
  ["スナップ", true],
  ["スライス", false],
  ["プロファイルを表示", true],
  ["点を表示", true],
  ["寸法を表示", true],
  ["拘束を表示", true],
  ["投影されたジオメトリを表示", true],
  ["3D スケッチ", false],
];

const X_LABELS: [string, number, number][] = [
  ["-125", 66, 342],
  ["-100", 146, 342],
  ["-75", 226, 340],
  ["-50", 306, 340],
  ["-25", 386, 340],
  ["25", 486, 238],
  ["50", 486, 158],
  ["75", 486, 78],
];

export default function App() {
  return (
    <Root>
      <GlobalStyle />
      <TitleBar>
        <AppLogo>
          <LogoIcon />
        </AppLogo>
        <TitleText>Autodesk Fusion 360 (個人用 - 商用利用不可)</TitleText>
        <WindowControls>
          <WinButton>
            <svg width="10" height="10" viewBox="0 0 10 10">
              <rect y="8" width="8" height="2" fill="#222" />
            </svg>
          </WinButton>
          <WinButton>
            <svg width="11" height="10" viewBox="0 0 11 10">
              <rect x="0.5" y="0.5" width="10" height="8" fill="none" stroke="#222" />
              <rect x="0" y="0" width="11" height="2" fill="#222" />
            </svg>
          </WinButton>
          <WinButton $close>
            <XMark />
          </WinButton>
        </WindowControls>
      </TitleBar>

      <Frame>
        <TabBar>
          <QuickBar>
            <AppsIcon />
            <QuickSlot $gap={19}><FileIcon /></QuickSlot>
            <QuickSlot $gap={6}><Caret $color="#666" /></QuickSlot>
            <QuickSlot $gap={20}><SaveIcon /></QuickSlot>
            <QuickSlot $gap={19}><UndoIcon c="#5e5e5e" /></QuickSlot>
            <QuickSlot $gap={5}><Caret $color="#666" /></QuickSlot>
            <QuickSlot $gap={13}><UndoIcon c="#8f8f8f" flip /></QuickSlot>
            <QuickSlot $gap={6}><Caret $color="#999" /></QuickSlot>
          </QuickBar>
          <DocTab>
            <LockIcon />
            <span>無題*</span>
            <TabClose>
              <XMark c="#666" w={1.5} />
            </TabClose>
          </DocTab>
          <PlusTab>
            <svg width="14" height="14" viewBox="0 0 14 14">
              <path d="M5.5 0H8.5V5.5H14V8.5H8.5V14H5.5V8.5H0V5.5H5.5Z" fill="#6e6e6e" />
            </svg>
          </PlusTab>
          <RightCluster>
            <Quota>
              <QuotaIcon />
              0/10
            </Quota>
            <StatusIcon><ClockIcon /></StatusIcon>
            <StatusIcon><FaBell size={15} /></StatusIcon>
            <StatusIcon><FaQuestionCircle size={17} /></StatusIcon>
            <Avatar>YI</Avatar>
          </RightCluster>
        </TabBar>

        <Ribbon>
          <DesignBox>
            デザイン <Caret />
          </DesignBox>
          <ToolArea>
            <TabRow>
              <RibbonTab $w={72}>ソリッド</RibbonTab>
              <RibbonTab $w={84}>サーフェス</RibbonTab>
              <RibbonTab $w={106}>シート メタル</RibbonTab>
              <RibbonTab $w={62}>ツール</RibbonTab>
              <RibbonTab $w={60} $gap={18} $active>スケッチ</RibbonTab>
            </TabRow>
            <ToolRow>
              <Group $l={6} $r={7}>
                <ToolIcons>
                  <Tool><SlotIcon /></Tool>
                  <Tool><RectIcon /></Tool>
                  <Tool $state="active"><CircleIcon /></Tool>
                  <Tool><SplineIcon /></Tool>
                  <Tool><TriangleIcon /></Tool>
                  <Tool><DimIcon /></Tool>
                </ToolIcons>
                <GroupLabel $pull={7}>作成 <Caret /></GroupLabel>
              </Group>
              <GroupSep />
              <Group $l={6} $r={6}>
                <ToolIcons>
                  <Tool><FilletIcon /></Tool>
                  <Tool><ScissorsIcon /></Tool>
                  <Tool><OffsetIcon /></Tool>
                </ToolIcons>
                <GroupLabel $pull={7}>修正 <Caret /></GroupLabel>
              </Group>
              <GroupSep />
              <Group $l={6} $r={7}>
                <ToolIcons>
                  <Tool><FixIcon /></Tool>
                  <Tool><CoincidentIcon /></Tool>
                  <Tool><TangentIcon /></Tool>
                  <Tool><EqualIcon /></Tool>
                  <Tool><ParallelIcon /></Tool>
                  <Tool><PerpIcon /></Tool>
                </ToolIcons>
                <GroupLabel $pull={6}>拘束 <Caret /></GroupLabel>
              </Group>
              <GroupSep />
              <Group $l={8} $r={10}>
                <Tool><MeasureIcon /></Tool>
                <GroupLabel $pull={2}>検査 <Caret /></GroupLabel>
              </Group>
              <GroupSep />
              <Group $l={7} $r={11}>
                <Tool><ImageIcon /></Tool>
                <GroupLabel>挿入 <Caret /></GroupLabel>
              </Group>
              <GroupSep />
              <Group $l={8} $r={14}>
                <Tool $state="select"><SelectIcon /></Tool>
                <GroupLabel $pull={1}>選択 <Caret /></GroupLabel>
              </Group>
              <FinishButton>
                <CheckCircle />
                <FinishLabel>スケッチを終了 <Caret /></FinishLabel>
              </FinishButton>
            </ToolRow>
          </ToolArea>
        </Ribbon>

        <Banner>
          <BannerText>
            グラフィックス ドライバの問題により、パフォーマンスが制限されている可能性があります。<u>詳細はこちら。</u>
          </BannerText>
          <BannerClose>
            <XMark />
          </BannerClose>
        </Banner>

        <Canvas>
          <AxisV />
          <AxisH />
          <OriginMark>
            <OriginIcon />
          </OriginMark>
          {X_LABELS.map(([t, x, y]) => (
            <AxisLabel key={t} $x={x} $y={y}>
              {t}
            </AxisLabel>
          ))}

          <BrowserPanel>
            <PanelHeader>
              <DoubleArrow left />
              ブラウザ
            </PanelHeader>
            <Tree>
              <TreeRow $indent={17}>
                <TreeToggle $gap={8}><RootToggle /></TreeToggle>
                <TreePill $w={136}>
                  <TreeIcon $w={25}><EyeIcon /></TreeIcon>
                  <RootBlock>
                    <TreeIcon $w={22}><CubeIcon /></TreeIcon>
                    <TreeText $ml={10}>(未保存)</TreeText>
                  </RootBlock>
                  <TreeIcon $w={20}><RadioMark /></TreeIcon>
                </TreePill>
              </TreeRow>
              <TreeRow $indent={36}>
                <TreeToggle $gap={9}><ChildToggle /></TreeToggle>
                <TreePill $w={118}>
                  <TreeIcon $w={22}><FaCog size={17} /></TreeIcon>
                  <TreeText $ml={12}>ドキュメントの設定</TreeText>
                </TreePill>
              </TreeRow>
              <TreeRow $indent={36}>
                <TreeToggle $gap={9}><ChildToggle /></TreeToggle>
                <TreePill $w={90}>
                  <TreeIcon $w={22}><FolderIcon /></TreeIcon>
                  <TreeText $ml={10}>ビュー管理</TreeText>
                </TreePill>
              </TreeRow>
              <TreeRow $indent={36}>
                <TreeToggle $gap={9}><ChildToggle /></TreeToggle>
                <TreePill $w={91}>
                  <TreeIcon $w={22}><EyeIcon off /></TreeIcon>
                  <TreeIcon $w={28}><FolderIcon /></TreeIcon>
                  <TreeText $ml={8}>原点</TreeText>
                </TreePill>
              </TreeRow>
              <TreeRow $indent={36}>
                <TreeToggle $gap={9}><ChildToggle /></TreeToggle>
                <TreePill $w={99}>
                  <TreeIcon $w={22}><EyeIcon /></TreeIcon>
                  <TreeIcon $w={28}><FolderIcon /></TreeIcon>
                  <TreeText $ml={7}>スケッチ</TreeText>
                </TreePill>
              </TreeRow>
            </Tree>
          </BrowserPanel>

          <WarningBar>
            <WarningText>未保存の変更が失われる可能性があります</WarningText>
            <WarningSave>保存</WarningSave>
          </WarningBar>

          <ViewCube>
            <CubeFace>上</CubeFace>
            <CubeAxis $c="#a9f09a" $l={0} $t={-13}>Y</CubeAxis>
            <CubeAxis $c="#ff9a9a" $l={45} $t={32}>X</CubeAxis>
            <CubeAxis $c="#8f8ff5" $l={-6} $t={37}>Z</CubeAxis>
          </ViewCube>

          <Palette>
            <PaletteHead>
              <Grip />
              <TreeIcon $w={20}><MinusCircle /></TreeIcon>
              <PaletteTitle>スケッチ パレット</PaletteTitle>
              <TimelineGear><DoubleArrow /></TimelineGear>
            </PaletteHead>
            <OptionHead>
              <Caret $color="#333" $big />
              オプション
            </OptionHead>
            <OptionRow>
              <OptionLabel>線種</OptionLabel>
              <OptionIcons>
                <LineTypeA />
                <LineTypeB />
              </OptionIcons>
            </OptionRow>
            <OptionRow>
              <OptionLabel>ビュー正面</OptionLabel>
              <OptionIcons>
                <ViewFrontIcon />
              </OptionIcons>
            </OptionRow>
            {OPTIONS.map(([label, on]) => (
              <OptionRow key={label}>
                <OptionLabel>{label}</OptionLabel>
                <CheckBox $on={on}>{on && <CheckMark />}</CheckBox>
              </OptionRow>
            ))}
            <PaletteFoot>
              <PlainButton>スケッチを終了</PlainButton>
            </PaletteFoot>
          </Palette>

          <NavBar>
            <NavSlot $w={18}><OrbitIcon /></NavSlot>
            <NavSlot $w={14}><Caret /></NavSlot>
            <NavSlot $w={20}><ViewFrontIcon /></NavSlot>
            <NavSlot $w={32}><FaRegHandPaper size={16} /></NavSlot>
            <NavSlot $w={20}><ZoomLens /></NavSlot>
            <NavSlot $w={24} $ml={4}><FitIcon /></NavSlot>
            <NavSlot $w={8}><Caret /></NavSlot>
            <NavSlot $w={20} $ml={3}><DisplayIcon /></NavSlot>
            <NavSlot $w={6}><Caret /></NavSlot>
            <NavSlot $w={18} $ml={6}><GridIcon /></NavSlot>
            <NavSlot $w={8}><Caret /></NavSlot>
            <NavSlot $w={20} $ml={4}><PanesIcon /></NavSlot>
            <NavSlot $w={6}><Caret /></NavSlot>
          </NavBar>

          <CommentPanel>
            コメント
            <CommentTools>
              <PlusCircle />
              <Grip />
            </CommentTools>
          </CommentPanel>
        </Canvas>

        <Timeline>
          <PlayButton><FirstIcon /></PlayButton>
          <PlayButton><PrevIcon /></PlayButton>
          <PlayButton><PlayIcon /></PlayButton>
          <PlayButton><NextIcon /></PlayButton>
          <PlayButton><LastIcon /></PlayButton>
          <TimelineMarks><TimelineMarksIcon /></TimelineMarks>
          <TimelineGear><FaCog size={16} /></TimelineGear>
        </Timeline>
      </Frame>

      <Tooltip>
        <TipLine>中心と直径で指定した円 (c)</TipLine>
        <TipLine>中心点と直径を使用して円を作成します。</TipLine>
        <TipLine $gap={3}>選択して中心点を定義し、直径を指定します。</TipLine>
      </Tooltip>
    </Root>
  );
}
